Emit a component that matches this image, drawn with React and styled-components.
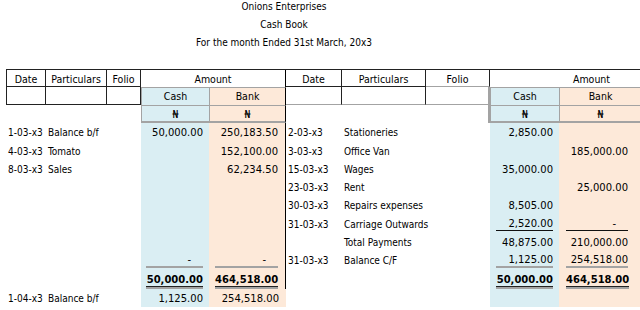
import React from "react";
import styled, { createGlobalStyle } from "styled-components";

const GlobalStyle = createGlobalStyle`
  body {
    margin: 0;
    background: #fff;
  }
`;

const TEXT_FONT = `"DejaVu Sans Condensed", "DejaVu Sans", sans-serif`;
const FIGURE_FONT = `"DejaVu Sans", sans-serif`;
const SOFT = "#a3a3a3";
const tones = { cash: "#daeef3", bank: "#fde9d9" };

// debit side of the book
const receipts = [
  { date: "1-03-x3", item: "Balance b/f", cash: "50,000.00", bank: "250,183.50" },
  { date: "4-03-x3", item: "Tomato", bank: "152,100.00" },
  { date: "8-03-x3", item: "Sales", bank: "62,234.50" },
  {},
  {},
  {},
  {},
  { cash: "-", bank: "-", rule: "gray" },
  { cash: "50,000.00", bank: "464,518.00", rule: "double", bold: true },
  { date: "1-04-x3", item: "Balance b/f", cash: "1,125.00", bank: "254,518.00", open: true },
];

// credit side
const payments = [
  { date: "2-03-x3", item: "Stationeries", cash: "2,850.00" },
  { date: "3-03-x3", item: "Office Van", bank: "185,000.00" },
  { date: "15-03-x3", item: "Wages", cash: "35,000.00" },
  { date: "23-03-x3", item: "Rent", bank: "25,000.00" },
  { date: "30-03-x3", item: "Repairs expenses", cash: "8,505.00" },
  { date: "31-03-x3", item: "Carriage Outwards", cash: "2,520.00", bank: "-", rule: "single" },
  { item: "Total Payments", cash: "48,875.00", bank: "210,000.00" },
  { date: "31-03-x3", item: "Balance C/F", cash: "1,125.00", bank: "254,518.00", rule: "gray" },
  { cash: "50,000.00", bank: "464,518.00", rule: "double", bold: true },
  {},
];

const ROWS = "17px 18px 18px 19px 18px 18px 18px 19px 18px 18px 19px 19px 18px";

const Amounts = ({ row, cashInset, bankInset, edge }) => (
  <>
    <FigureCell $tone="cash" $inset={cashInset}>
      {row.cash && (
        <Figure $rule={row.rule} $bold={row.bold} $dash={row.cash === "-"}>
          {row.cash}
        </Figure>
      )}
    </FigureCell>
    <FigureCell $tone="bank" $inset={bankInset} $edge={edge}>
      {row.bank && (
        <Figure $rule={row.rule} $bold={row.bold} $dash={row.bank === "-"}>
          {row.bank}
        </Figure>
      )}
    </FigureCell>
  </>
);

const App = () => {
  return (
    <>
      <GlobalStyle />
      <Sheet>
        <Titles>
          <TitleLine>Onions Enterprises</TitleLine>
          <TitleLine>Cash Book</TitleLine>
          <TitleLine>For the month Ended 31st March, 20x3</TitleLine>
        </Titles>
        <Ledger>
          <Side $cols="40px 61px 34px 68px 77px">
            <Head $first>Date</Head>
            <Head>Particulars</Head>
            <Head>Folio</Head>
            <AmountHead $edge>Amount</AmountHead>
            <Head $first />
            <Head />
            <Head />
            <SubHead $tone="cash">Cash</SubHead>
            <SubHead $tone="bank" $edge>Bank</SubHead>
            <Blank />
            <Blank />
            <Blank />
            <SubHead $tone="cash" $thick>₦</SubHead>
            <SubHead $tone="bank" $thick $edge>₦</SubHead>
            {receipts.map((row, i) => (
              <React.Fragment key={i}>
                <Cell>{row.date}</Cell>
                <Cell>{row.item}</Cell>
                <Cell />
                <Amounts row={row} cashInset="5px 6px" bankInset="6px 7px" edge={!row.open} />
              </React.Fragment>
            ))}
          </Side>
          <Side $cols="56px 84px 64px 69px 82px">
            <Head>Date</Head>
            <Head>Particulars</Head>
            <Head $soft>Folio</Head>
            <AmountHead $offset={52}>Amount</AmountHead>
            <Head $soft />
            <Head $soft />
            <Head $soft $softEdge />
            <SubHead $tone="cash">Cash</SubHead>
            <SubHead $tone="bank">Bank</SubHead>
            <Blank />
            <Blank />
            <Blank $softEdge />
            <SubHead $tone="cash" $thick>₦</SubHead>
            <SubHead $tone="bank" $thick>₦</SubHead>
            {payments.map((row, i) => (
              <React.Fragment key={i}>
                <Cell>{row.date}</Cell>
                <Cell>{row.item}</Cell>
                <Cell />
                <Amounts row={row} cashInset="6px 6px" bankInset="7px 13px" />
              </React.Fragment>
            ))}
          </Side>
        </Ledger>
      </Sheet>
    </>
  );
};

export default App;

const Sheet = styled.div`
  width: 640px;
  height: 310px;
  overflow: hidden;
  font-family: ${TEXT_FONT};
  color: #000;
`;

const Titles = styled.div`
  width: 568px;
  margin: -2px 0 17px;
  text-align: center;
`;

const TitleLine = styled.div`
  height: 18px;
  line-height: 18px;
  font-size: 10px;
`;

const Ledger = styled.div`
  display: flex;
  padding-left: 6px;
`;

const Side = styled.div`
  display: grid;
  grid-template-columns: ${(p) => p.$cols};
  grid-template-rows: ${ROWS};
  border-top: 1px solid #222;
  flex-shrink: 0;
`;

const Head = styled.div`
  font-size: 10.5px;
  line-height: 18px;
  text-align: center;
  border-right: 1px solid ${(p) => (p.$softEdge ? SOFT : "#222")};
  border-bottom: 1px solid ${(p) => (p.$soft ? SOFT : "#222")};
  border-left: ${(p) => (p.$first ? "1px solid #222" : "none")};
  ${(p) => p.$softEdge && `border-right-width: 2px;`}
`;

const AmountHead = styled.div`
  grid-column: span 2;
  font-size: 10.5px;
  line-height: 18px;
  text-align: center;
  padding-left: ${(p) => p.$offset || 0}px;
  border-right: ${(p) => (p.$edge ? "1px solid #000" : "none")};
`;

const SubHead = styled.div`
  font-size: ${(p) => (p.$thick ? "10px" : "10.5px")};
  font-family: ${(p) => (p.$thick ? FIGURE_FONT : TEXT_FONT)};
  line-height: 17px;
  text-align: center;
  background: ${(p) => tones[p.$tone]};
  border-top: 1px solid ${SOFT};
  border-left: 1px solid ${SOFT};
  border-bottom: ${(p) => (p.$thick ? `2px solid ${SOFT}` : "none")};
  border-right: ${(p) => (p.$edge ? "1px solid #000" : "none")};
`;

const Blank = styled.div`
  border-right: ${(p) => (p.$softEdge ? `2px solid ${SOFT}` : "none")};
`;

const Cell = styled.div`
  display: flex;
  align-items: center;
  padding: 0 2px;
  font-size: 10px;
  white-space: nowrap;
`;

const FigureCell = styled.div`
  display: flex;
  align-items: center;
  padding: 0 ${(p) => p.$inset.split(" ")[1]} 0 ${(p) => p.$inset.split(" ")[0]};
  background: ${(p) => tones[p.$tone]};
  border-right: ${(p) => (p.$edge ? "1px solid #000" : "none")};
  font-family: ${FIGURE_FONT};
  font-size: 10px;
`;

const rules = {
  single: "border-bottom: 1px solid #111;",
  gray: `border-bottom: 2px solid ${SOFT};`,
  double: `border-bottom: 1px solid #222; box-shadow: 0 2px 0 ${SOFT};`,
};

const Figure = styled.span`
  flex: 1;
  display: block;
  text-align: right;
  line-height: 13px;
  font-weight: ${(p) => (p.$bold ? 700 : 400)};
  padding-right: ${(p) => (p.$dash ? "12px" : "0")};
  ${(p) => rules[p.$rule] || ""}
`;
